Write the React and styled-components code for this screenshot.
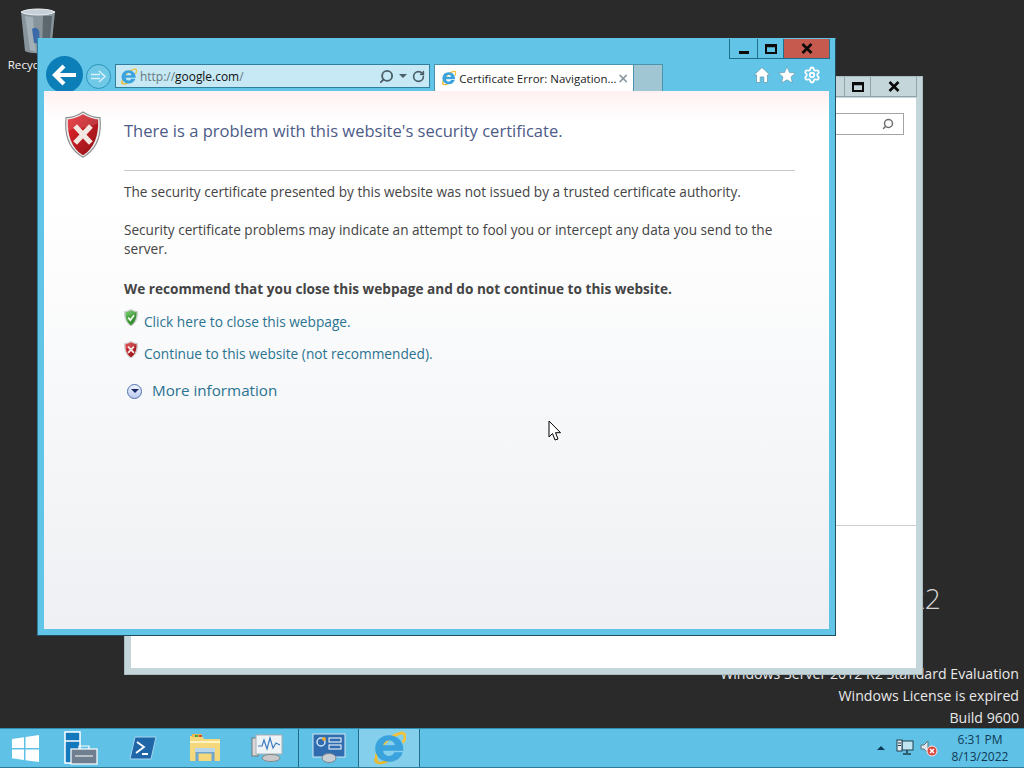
import React from 'react';
import styled, { createGlobalStyle } from 'styled-components';
import { Settings, Search, RotateCw, X } from 'lucide-react';

const Global = createGlobalStyle`
  html, body { margin: 0; padding: 0; background: #2a2a2a; }
  * { box-sizing: border-box; }
`;

const Desktop = styled.div`
  position: relative;
  width: 1024px;
  height: 768px;
  overflow: hidden;
  background: #2a2a2a;
  font-family: "Open Sans", "Noto Sans", sans-serif;
  display: flex;
  flex-direction: column;
`;

const Screen = styled.div`
  flex: 1;
  position: relative;
`;

const RecycleBin = styled.div`
  position: absolute;
  left: 0;
  top: 7px;
  width: 76px;
  display: flex;
  flex-direction: column;
  align-items: center;
  color: #f4f4f4;
  font-size: 11.6px;
  line-height: 16px;
`;

const BinLabel = styled.span`
  margin-top: 3px;
  white-space: nowrap;
`;

const Watermark = styled.div`
  position: absolute;
  right: 5px;
  top: 663px;
  display: flex;
  flex-direction: column;
  align-items: flex-end;
  color: #e8e8e8;
  font-size: 14.15px;
  line-height: 22px;
  white-space: nowrap;
`;

const BigMark = styled.div`
  position: absolute;
  left: 908px;
  top: 580px;
  color: #d4d4d4;
  font-size: 28px;
  line-height: 36px;
  font-weight: 300;
`;

const BackWindow = styled.div`
  position: absolute;
  left: 124px;
  top: 76px;
  width: 799px;
  height: 599px;
  background: #c4d6da;
  border: 1px solid #a9bcc1;
  padding: 21px 6px 6px 6px;
  display: flex;
`;

const BackControls = styled.div`
  position: absolute;
  top: 0;
  right: 5px;
  display: flex;
  height: 20px;
  border: 1px solid #8fa3a8;
  border-top: none;
`;

const BackBody = styled.div`
  flex: 1;
  background: #fff;
  display: flex;
  flex-direction: column;
  padding: 15px 12px 0 0;
`;

const BackSearch = styled.div`
  align-self: flex-end;
  width: 120px;
  height: 22px;
  border: 1px solid #a5a5a5;
  display: flex;
  align-items: center;
  justify-content: flex-end;
  padding-right: 9px;
  color: #6d6d6d;
`;

const BackRule = styled.div`
  height: 1px;
  background: #d0d0d0;
  margin: 390px -12px 0 0;
`;

const Ctl = styled.div`
  width: ${p => p.$w}px;
  display: flex;
  align-items: center;
  justify-content: center;
  color: #000;
  background: ${p => p.$bg || 'transparent'};
  border-left: ${p => (p.$first ? 'none' : `1px solid ${p.$line || '#1d6f8c'}`)};
`;

const IEWindow = styled.div`
  position: absolute;
  left: 37px;
  top: 38px;
  width: 799px;
  height: 598px;
  background: #62c4e6;
  border: 1px solid #1c4f63;
  border-top-color: #62c4e6;
  border-left-color: #2f7f9e;
  display: flex;
  flex-direction: column;
  padding: 0 6px 6px 6px;
`;

const TitleControls = styled.div`
  position: absolute;
  top: 0;
  right: 5px;
  display: flex;
  height: 20px;
  border: 1px solid #1d6f8c;
  border-top: none;
`;

const NavBar = styled.div`
  height: 52px;
  display: flex;
  align-items: flex-end;
  position: relative;
`;

const BackButton = styled.div`
  position: absolute;
  left: 2px;
  top: 17px;
  width: 37px;
  height: 37px;
  border-radius: 50%;
  background: #0d7fb8;
  display: flex;
  align-items: center;
  justify-content: center;
`;

const ForwardButton = styled.div`
  width: 25px;
  height: 25px;
  border-radius: 50%;
  border: 1px solid #2d93bc;
  background: #6fc8e6;
  display: flex;
  align-items: center;
  justify-content: center;
  margin: 0 4px 2px 42px;
`;

const AddressBar = styled.div`
  width: 315px;
  height: 24px;
  margin-bottom: 3px;
  background: #c6e9f5;
  border: 1px solid #2f7f9e;
  display: flex;
  align-items: center;
  padding: 0 3px 0 4px;
  font-size: 11.95px;
  color: #111;
`;

const Scheme = styled.span`
  color: #68787f;
`;

const AddressText = styled.div`
  flex: 1;
  margin-left: 3px;
  white-space: nowrap;
`;

const AddressTools = styled.div`
  display: flex;
  align-items: center;
  gap: 5px;
  color: #4a5f68;
  padding-right: 1px;
`;

const MirrorSearch = styled(Search)`
  transform: scaleX(-1);
`;

const Caret = styled.div`
  width: 0;
  height: 0;
  border-left: 4px solid transparent;
  border-right: 4px solid transparent;
  border-top: 4px solid ${p => p.$color || '#4a5f68'};
`;

const TrayCaret = styled(Caret)`
  transform: rotate(180deg);
  margin-right: 5px;
`;

const Tab = styled.div`
  width: 200px;
  height: 27px;
  margin-left: 4px;
  background: #fff;
  border: 1px solid #4b93ad;
  border-bottom: none;
  display: flex;
  align-items: center;
  padding: 0 4px 0 6px;
  font-size: 11.5px;
  color: #222;
  white-space: nowrap;
`;

const TabLabel = styled.span`
  flex: 1;
  margin-left: 3px;
`;

const NewTab = styled.div`
  width: 29px;
  height: 27px;
  background: #a0c6d4;
  border: 1px solid #4b93ad;
  border-left: none;
  border-bottom: none;
`;

const Tools = styled.div`
  margin-left: auto;
  display: flex;
  align-items: center;
  gap: 7px;
  height: 27px;
  padding: 0 8px 5px 0;
  color: #fff;
`;

const Page = styled.div`
  flex: 1;
  background: linear-gradient(180deg, #fff1f1 0, #ffffff 30px, #ffffff 110px, #eef0f3 100%);
  padding: 20px 34px 0 20px;
  display: grid;
  grid-template-columns: 60px 1fr;
  position: relative;
`;

const ShieldCol = styled.div`
  display: flex;
  justify-content: flex-start;
`;

const Content = styled.div`
  display: flex;
  flex-direction: column;
  min-width: 0;
`;

const Heading = styled.h1`
  margin: 7px 0 0 0;
  height: 53px;
  padding: 0;
  font-size: 16.55px;
  line-height: 25px;
  font-weight: 400;
  color: #4d5b88;
  border-bottom: 1px solid #c8c8c8;
`;

const Para = styled.p`
  margin: ${p => p.$top}px 0 0 0;
  font-size: 13.62px;
  line-height: 19px;
  color: #444;
  font-weight: ${p => (p.$bold ? 700 : 400)};
`;

const LinkRow = styled.div`
  display: flex;
  align-items: flex-start;
  margin-top: ${p => p.$top}px;
  font-size: 13.7px;
  line-height: 19px;
  color: #2a7391;
`;

const LinkIcon = styled.div`
  width: 20px;
  height: 19px;
  margin-top: -3px;
  flex: none;
`;

const MoreRow = styled.div`
  display: flex;
  align-items: center;
  margin-top: 16px;
  font-size: 15.2px;
  line-height: 22px;
  color: #2a7391;
`;

const MoreIcon = styled.div`
  width: 15px;
  height: 15px;
  margin: 2px 10px 0 3px;
  border-radius: 50%;
  border: 1px solid #4d6fb0;
  background: linear-gradient(180deg, #f2f5fd, #b9c8ee);
  display: flex;
  align-items: center;
  justify-content: center;
  flex: none;
`;

const Pointer = styled.svg`
  position: absolute;
  left: 548px;
  top: 420px;
`;

const Taskbar = styled.div`
  height: 40px;
  background: #5fc1e5;
  border-top: 1px solid #2f8fb2;
  border-bottom: 1px solid #2b7b99;
  display: flex;
  align-items: stretch;
`;

const Start = styled.div`
  width: 50px;
  display: flex;
  align-items: center;
  justify-content: center;
`;

const TaskItem = styled.div`
  width: ${p => p.$w}px;
  display: flex;
  align-items: center;
  justify-content: center;
  border-right: ${p => (p.$line ? '1px solid #1f6f8c' : 'none')};
  background: ${p => (p.$active ? '#84d0ec' : 'transparent')};
`;

const Tray = styled.div`
  margin-left: auto;
  display: flex;
  align-items: center;
  padding-right: 12px;
`;

const Clock = styled.div`
  width: 64px;
  margin-left: 10px;
  text-align: center;
  font-size: 12px;
  line-height: 17px;
  color: #0f3a57;
`;

const TrayIcons = styled.div`
  display: flex;
  align-items: center;
  gap: 6px;
`;

const ShieldIcon = ({ size, id, light, dark, mark }) => (
  <svg width={size} height={size * 1.24} viewBox="0 0 40 50">
    <defs>
      <linearGradient id={id} x1="0" y1="0" x2="1" y2="1">
        <stop offset="0" stopColor={light} />
        <stop offset="1" stopColor={dark} />
      </linearGradient>
    </defs>
    <path d="M20 1 C26 5 32 7 38 7 C40 26 34 41 20 49 C6 41 0 26 2 7 C8 7 14 5 20 1 Z" fill="#ececec" stroke="#8f8f8f" strokeWidth="1.2" />
    <path d="M20 3.500 C26 7 32 8.500 36 9 C37 25 32 40 20 47 C8 40 3 25 4 9 C8 8.500 14 7 20 3.500 Z" fill={`url(#${id})`} />
    <path d="M4 9 C8 8.500 14 7 20 3.500 C26 7 32 8.500 36 9 L36 13 C25 19 14 17 4 21 Z" fill="#fff" opacity="0.14" />
    {mark === 'x' ? (
      <path d="M13.500 18 L26.500 32 M26.500 18 L13.500 32" stroke="#f3e7e2" strokeWidth="5.5" strokeLinecap="square" />
    ) : (
      <path d="M12 25 L18 32 L29 18" stroke="#f2fbf0" strokeWidth="5" fill="none" />
    )}
  </svg>
);

const IELogo = ({ size }) => (
  <svg width={size} height={size} viewBox="0 0 32 32">
    <path d="M5 29 C0 22 14 5 27 2 C32 1 32 7 29 11" fill="none" stroke="#f2c23a" strokeWidth="2.6" />
    <path d="M3 26 C3 31 9 31 15 28" fill="none" stroke="#e8b92f" strokeWidth="2.4" />
    <path d="M16 4 C8 4 3 10 3 16.500 C3 24 9 29 16 29 C22 29 27 26 29 20 L21 20 C20 22.500 18 23.500 16 23.500 C13 23.500 10.500 21 10.500 18.500 L29.500 18.500 C30 10 24 4 16 4 Z M10.500 13.500 C11 11 13 9 16 9 C19 9 21.500 11 21.500 13.500 Z" fill="#3aa2dc" fillRule="evenodd" />
  </svg>
);

const BinIcon = () => (
  <svg width="38" height="47" viewBox="0 0 38 47">
    <path d="M2 5 C8 1 30 1 36 5 L32 44 C28 47 10 47 6 44 Z" fill="#87949c" />
    <path d="M2 5 C8 1 30 1 36 5 C30 9 8 9 2 5 Z" fill="#c7d0d6" stroke="#e7ecef" />
    <path d="M6 9 L11 43 L17 45 L14 10 Z" fill="#a3afb6" />
    <path d="M13 22 C18 18 22 24 20 30 C24 32 22 38 15 36 Z" fill="#3c6aa8" />
    <path d="M24 9 L23 45 L30 44 L33 9 Z" fill="#5c676e" />
  </svg>
);

const BackArrow = () => (
  <svg width="26" height="22" viewBox="0 0 26 22">
    <path d="M12 2 L3 11 L12 20 M4 11 L24 11" fill="none" stroke="#fff" strokeWidth="4.2" />
  </svg>
);

const ForwardArrow = () => (
  <svg width="17" height="15" viewBox="0 0 17 15">
    <path d="M9 2 L15 7.500 L9 13 M1 5.500 H10 M1 9.500 H10" fill="none" stroke="#d8f1fa" strokeWidth="1.5" />
  </svg>
);

const WinMin = () => (
  <svg width="12" height="12" viewBox="0 0 12 12">
    <rect x="1" y="8" width="10" height="3" fill="#0a0a0a" />
  </svg>
);

const WinMax = () => (
  <svg width="12" height="10" viewBox="0 0 12 10">
    <path d="M1 1 H11 V9 H1 Z M1 2.200 H11" fill="none" stroke="#0a0a0a" strokeWidth="2" />
  </svg>
);

const WinClose = () => (
  <svg width="12" height="11" viewBox="0 0 12 11">
    <path d="M1.500 1 L10.500 10 M10.500 1 L1.500 10" stroke="#0a0a0a" strokeWidth="2.600" />
  </svg>
);

const HomeIcon = () => (
  <svg width="18" height="18" viewBox="0 0 18 18">
    <path d="M9 1.500 L17 9 L14.500 9 V16.500 H10.800 V11 H7.200 V16.500 H3.500 V9 L1 9 Z" fill="#fff" stroke="#5a93a8" strokeWidth="0.7" />
  </svg>
);

const StarIcon = () => (
  <svg width="18" height="18" viewBox="0 0 18 18">
    <path d="M9 0.800 L11.500 6.500 L17.500 7 L13 11 L14.400 17 L9 13.800 L3.600 17 L5 11 L0.500 7 L6.500 6.500 Z" fill="#fff" stroke="#5a93a8" strokeWidth="0.6" />
  </svg>
);

const WindowsLogo = () => (
  <svg width="27" height="27" viewBox="0 0 27 27">
    <path d="M0 4 L12 2.300 V13 H0 Z M13.500 2 L27 0 V13 H13.500 Z M0 14.500 H12 V25 L0 23.300 Z M13.500 14.500 H27 V27 L13.500 25.200 Z" fill="#fff" />
  </svg>
);

const ServerManager = () => (
  <svg width="34" height="34" viewBox="0 0 34 34">
    <rect x="1" y="1" width="15" height="31" fill="#1478bd" stroke="#fff" strokeWidth="1.5" />
    <path d="M1 10 H16" stroke="#fff" strokeWidth="1.5" />
    <rect x="7" y="18" width="26" height="15" fill="#6f7f8f" stroke="#fff" strokeWidth="1.200" />
    <path d="M15 18 V15 H25 V18 M11 25 H29" fill="none" stroke="#fff" strokeWidth="1.200" />
  </svg>
);

const PowerShell = () => (
  <svg width="28" height="24" viewBox="0 0 28 24">
    <path d="M6 1 H27 L22 23 H1 Z" fill="#1f66a8" stroke="#a6d4ee" />
    <path d="M8 6 L15 11 L7 17 M13 18 H19" fill="none" stroke="#fff" strokeWidth="1.800" />
  </svg>
);

const Folder = () => (
  <svg width="32" height="30" viewBox="0 0 32 30">
    <path d="M1 3 H13 L15 6 H31 V28 H1 Z" fill="#f5d77c" />
    <rect x="3" y="1" width="10" height="3" fill="#e8b94a" />
    <rect x="6" y="2" width="3" height="2" fill="#4aa34a" />
    <rect x="10" y="2" width="3" height="2" fill="#d24a3a" />
    <path d="M1 9 H31" stroke="#fff3c4" strokeWidth="2" />
    <path d="M8 28 V19 H24 V28" fill="none" stroke="#6fa6cf" strokeWidth="3" />
    <rect x="6" y="15" width="20" height="4" fill="#b9d7ea" />
  </svg>
);

const PerfMonitor = () => (
  <svg width="32" height="30" viewBox="0 0 32 30">
    <rect x="1" y="5" width="6" height="18" fill="#d8d8d8" stroke="#777" />
    <rect x="5" y="2" width="26" height="19" fill="#eef3f6" stroke="#a8b0b6" />
    <path d="M7 13 L11 13 L13 7 L16 16 L19 5 L22 15 L25 10 L29 12" fill="none" stroke="#3d7cc0" strokeWidth="1.200" />
    <ellipse cx="20" cy="25" rx="9" ry="3.500" fill="#c9c9c9" stroke="#888" />
  </svg>
);

const ControlPanel = () => (
  <svg width="34" height="30" viewBox="0 0 34 30">
    <rect x="1" y="1" width="32" height="23" fill="#2f6db0" stroke="#d6e8f4" />
    <circle cx="9" cy="9" r="4" fill="none" stroke="#cfe6f5" strokeWidth="1.500" />
    <circle cx="12" cy="6" r="2" fill="#f0a83a" />
    <rect x="17" y="5" width="12" height="4" fill="#2f6db0" stroke="#fff" />
    <rect x="17" y="12" width="12" height="4" fill="#2f6db0" stroke="#fff" />
    <ellipse cx="17" cy="25" rx="7" ry="4.500" fill="#c7ced4" stroke="#7b858c" />
  </svg>
);

const NetworkIcon = () => (
  <svg width="18" height="18" viewBox="0 0 18 18">
    <rect x="6" y="2" width="11" height="9" fill="#bfe4f2" stroke="#24404e" />
    <rect x="1" y="1" width="5" height="11" fill="#e2eef3" stroke="#24404e" />
    <path d="M2 4 H5 M2 6.500 H5" stroke="#24404e" />
    <path d="M11 11 V14 M7 15 H15" stroke="#24404e" strokeWidth="1.600" />
  </svg>
);

const SoundIcon = () => (
  <svg width="18" height="18" viewBox="0 0 18 18">
    <path d="M1 6 H4 L8 2 V14 L4 10 H1 Z" fill="#dfe7ec" stroke="#5f7480" />
    <circle cx="12" cy="12" r="5" fill="#d9473f" stroke="#fbe7e5" />
    <path d="M10 10 L14 14 M14 10 L10 14" stroke="#fff" strokeWidth="1.500" />
  </svg>
);

const CursorArrow = () => (
  <Pointer width="14" height="22" viewBox="0 0 14 22">
    <path d="M1 1 V17 L4.500 13.500 L7 20 L10 19 L7.500 12.700 H12.500 Z" fill="#fff" stroke="#000" strokeWidth="1" />
  </Pointer>
);

const App = () => {
  return (
    <Desktop>
      <Global />
      <Screen>
        <RecycleBin>
          <BinIcon />
          <BinLabel>Recycle Bin</BinLabel>
        </RecycleBin>
        <BigMark>R2</BigMark>
        <Watermark>
          <span>Windows Server 2012 R2 Standard Evaluation</span>
          <span>Windows License is expired</span>
          <span>Build 9600</span>
        </Watermark>

        <BackWindow>
          <BackControls>
            <Ctl $w={45} $first $line="#8fa3a8" />
            <Ctl $w={26} $line="#8fa3a8"><WinMax /></Ctl>
            <Ctl $w={46} $line="#8fa3a8"><WinClose /></Ctl>
          </BackControls>
          <BackBody>
            <BackSearch><MirrorSearch size={12} strokeWidth={3} /></BackSearch>
            <BackRule />
          </BackBody>
        </BackWindow>

        <IEWindow>
          <TitleControls>
            <Ctl $w={27} $first><WinMin /></Ctl>
            <Ctl $w={26}><WinMax /></Ctl>
            <Ctl $w={46} $bg="#c75a4e"><WinClose /></Ctl>
          </TitleControls>
          <NavBar>
            <BackButton><BackArrow /></BackButton>
            <ForwardButton><ForwardArrow /></ForwardButton>
            <AddressBar>
              <IELogo size={17} />
              <AddressText><Scheme>http://</Scheme>google.com<Scheme>/</Scheme></AddressText>
              <AddressTools>
                <MirrorSearch size={15} strokeWidth={3} />
                <Caret />
                <RotateCw size={13} strokeWidth={3} />
              </AddressTools>
            </AddressBar>
            <Tab>
              <IELogo size={16} />
              <TabLabel>Certificate Error: Navigation...</TabLabel>
              <X size={13} strokeWidth={3} color="#8b9aa2" />
            </Tab>
            <NewTab />
            <Tools>
              <HomeIcon />
              <StarIcon />
              <Settings size={18} strokeWidth={2.4} />
            </Tools>
          </NavBar>
          <Page>
            <ShieldCol><ShieldIcon id="bigRed" size={38} light="#e8262c" dark="#8e1016" mark="x" /></ShieldCol>
            <Content>
              <Heading>There is a problem with this website's security certificate.</Heading>
              <Para $top={11}>The security certificate presented by this website was not issued by a trusted certificate authority.</Para>
              <Para $top={19}>Security certificate problems may indicate an attempt to fool you or intercept any data you send to the server.</Para>
              <Para $top={21} $bold>We recommend that you close this webpage and do not continue to this website.</Para>
              <LinkRow $top={14}>
                <LinkIcon><ShieldIcon id="smallGreen" size={14} light="#5cc04e" dark="#2a7a2a" mark="v" /></LinkIcon>
                Click here to close this webpage.
              </LinkRow>
              <LinkRow $top={13}>
                <LinkIcon><ShieldIcon id="smallRed" size={14} light="#e0343c" dark="#8e1016" mark="x" /></LinkIcon>
                Continue to this website (not recommended).
              </LinkRow>
              <MoreRow>
                <MoreIcon><Caret $color="#1a2a6b" /></MoreIcon>
                More information
              </MoreRow>
            </Content>
          </Page>
        </IEWindow>
        <CursorArrow />
      </Screen>
      <Taskbar>
        <Start><WindowsLogo /></Start>
        <TaskItem $w={62}><ServerManager /></TaskItem>
        <TaskItem $w={62}><PowerShell /></TaskItem>
        <TaskItem $w={62}><Folder /></TaskItem>
        <TaskItem $w={63} $line><PerfMonitor /></TaskItem>
        <TaskItem $w={60} $line><ControlPanel /></TaskItem>
        <TaskItem $w={61} $line $active><IELogo size={34} /></TaskItem>
        <Tray>
          <TrayIcons>
            <TrayCaret $color="#0f3a57" />
            <NetworkIcon />
            <SoundIcon />
          </TrayIcons>
          <Clock>6:31 PM<br />8/13/2022</Clock>
        </Tray>
      </Taskbar>
    </Desktop>
  );
};

export default App;
